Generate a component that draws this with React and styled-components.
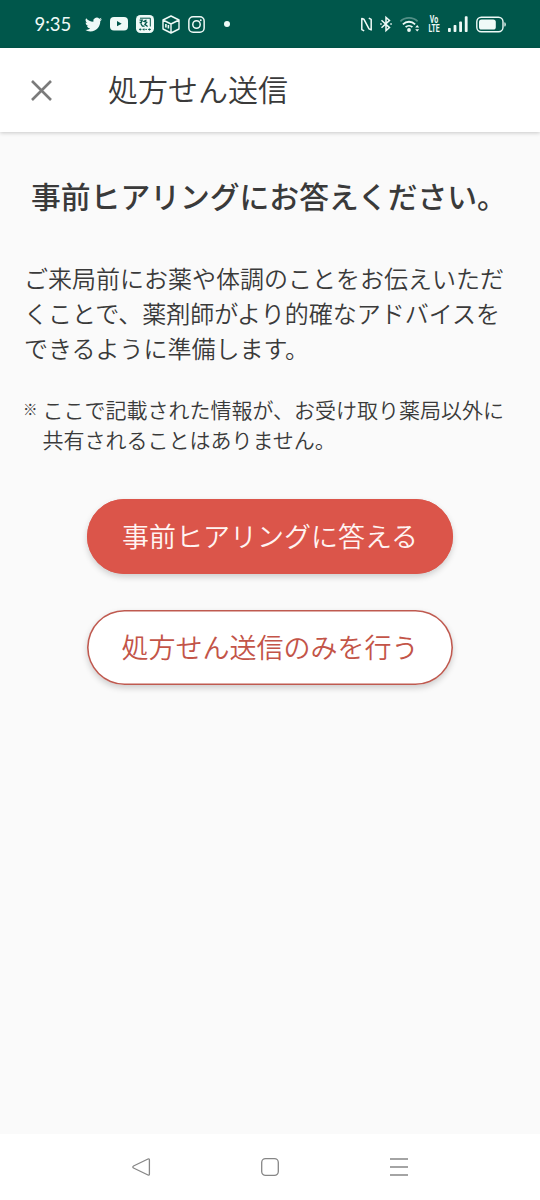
import React from 'react';
import styled, { createGlobalStyle } from 'styled-components';

const GlobalStyle = createGlobalStyle`
  * { box-sizing: border-box; }
  body {
    margin: 0;
    background: #fafafa;
    color: #3a3a3a;
    font-family: "Noto Sans CJK JP", "Noto Sans", sans-serif;
    font-weight: 350;
  }
  p, h1, h2 { margin: 0; font-weight: inherit; }
`;

const Screen = styled.div`
  display: flex;
  flex-direction: column;
  width: 540px;
  height: 1200px;
  overflow: hidden;
`;

const StatusBar = styled.header`
  display: flex;
  flex: none;
  align-items: center;
  justify-content: space-between;
  height: 48px;
  padding: 0 34px;
  background: #00574b;
  color: #effaf7;
`;

const StatusGroup = styled.div`
  display: flex;
  align-items: center;
  gap: ${(p) => p.$gap}px;
`;

const Clock = styled.span`
  width: 43px;
  padding-left: 0.5px;
  font: 400 18.5px/48px "Lato", sans-serif;
`;

const Icon = styled.svg`
  display: block;
  flex: none;
  overflow: visible;
`;

const Dot = styled.span`
  width: 6px;
  height: 6px;
  margin-left: 10.5px;
  border-radius: 50%;
  background: currentColor;
`;

const Volte = styled.span`
  display: flex;
  justify-content: center;
  width: 12px;
  font: 700 10.5px/9px "Roboto", sans-serif;
  text-align: center;
  transform: scaleX(0.66);
`;

const AppBar = styled.div`
  position: relative;
  display: flex;
  flex: none;
  align-items: center;
  gap: 56px;
  height: 84px;
  padding-left: 31px;
  background: #fff;
  box-shadow: 0 1px 4px rgba(0, 0, 0, 0.2);
`;

const CloseButton = styled.button`
  width: 21px;
  height: 21px;
  padding: 0;
  border: 0;
  background: none;
  color: #7b7b7b;
`;

const Title = styled.h1`
  padding-bottom: 4px;
  font-size: 30px;
  line-height: 44px;
`;

const Content = styled.main`
  display: flex;
  flex: 1;
  flex-direction: column;
  padding: 41px 24px 0;
`;

const Heading = styled.h2`
  padding-left: 7px;
  font-size: 29.8px;
  font-weight: 500;
  line-height: 44px;
  white-space: nowrap;
`;

const Lead = styled.p`
  margin-top: 43px;
  font-size: 24px;
  line-height: 35px;
  white-space: nowrap;
`;

const Note = styled.div`
  display: flex;
  margin-top: 29px;
  font-size: 21px;
  line-height: 30px;
  white-space: nowrap;
`;

const NoteMark = styled.span`
  width: 18.5px;
  margin-left: -1px;
  margin-right: 1px;
  font-size: 14.5px;
  font-weight: 700;
`;

const Actions = styled.div`
  display: flex;
  flex-direction: column;
  align-items: center;
  gap: 36px;
  margin-top: 45px;
`;

const PillButton = styled.button`
  width: 366px;
  height: 75px;
  padding: 0 0 2px;
  border: 0;
  border-radius: 38px;
  background: ${(p) => (p.$filled ? '#db554a' : '#fff')};
  box-shadow:
    inset 0 0 0 1.6px ${(p) => (p.$filled ? '#db554a' : '#bf5a50')},
    0 3px 6px rgba(0, 0, 0, 0.18);
  color: ${(p) => (p.$filled ? '#fff4f2' : '#c35448')};
  font: 350 27px/40px "Noto Sans CJK JP", sans-serif;
  white-space: nowrap;
`;

const NavBar = styled.nav`
  display: flex;
  flex: none;
  align-items: center;
  justify-content: space-between;
  height: 66px;
  padding: 0 132px;
  background: #fff;
  color: #868686;
`;

function TwitterIcon() {
  return (
    <Icon width="17" height="15" viewBox="0 2 24 20" fill="currentColor">
      <path d="M23.95 4.57a10 10 0 0 1-2.82.78 4.96 4.96 0 0 0 2.16-2.73c-.95.56-2 .96-3.13 1.19a4.92 4.92 0 0 0-8.38 4.48C7.69 8.1 4.07 6.13 1.64 3.16a4.92 4.92 0 0 0 1.52 6.57 4.9 4.9 0 0 1-2.23-.61v.06a4.92 4.92 0 0 0 3.95 4.83 5 5 0 0 1-2.21.08 4.94 4.94 0 0 0 4.6 3.42A9.87 9.87 0 0 1 0 19.54a13.99 13.99 0 0 0 7.56 2.21c9.05 0 14-7.5 14-13.98 0-.21 0-.42-.02-.63a9.94 9.94 0 0 0 2.46-2.55z" />
    </Icon>
  );
}

function YoutubeIcon() {
  return (
    <Icon width="18" height="13.5" viewBox="0 0 18 13.5">
      <rect width="18" height="13.5" rx="4" fill="currentColor" />
      <path d="M7 4.1v5.2l4.7-2.6z" fill="#00574b" />
    </Icon>
  );
}

function GameIcon() {
  return (
    <Icon width="18" height="18" viewBox="0 0 18 18">
      <rect width="18" height="18" rx="4.5" fill="currentColor" />
      <g fill="none" stroke="#00574b">
        <path d="M4 3.200h10.300v8.300" strokeWidth="1" />
        <path d="M3.600 5.200h2.600l-1 2.300H3.600M4.800 8.500l1.600 2.700h2.200M10.500 5l-2.500 1.300 2.700 1-1.800 2 2.700 2.100" strokeWidth="1.300" />
        <path d="M3 14.400h2.500M6.500 14.400h1.800M9.300 14.400H11M12 14.400h3M4.300 13.500v2M8 13.500v2M13.500 13.500v2" strokeWidth="0.9" />
      </g>
    </Icon>
  );
}

function BoxIcon() {
  return (
    <Icon width="18" height="19" viewBox="0 0 18 19" fill="none" stroke="currentColor" strokeWidth="1.4" strokeLinejoin="round">
      <path d="M9 1l8 4v9l-8 4-8-4V5zM1 5l8 4 8-4M9 9v9" />
      <path d="M3.900 8.900v3.600M6.400 10v3.600" strokeWidth="1.6" />
    </Icon>
  );
}

function InstagramIcon() {
  return (
    <Icon width="17" height="17" viewBox="0 0 16 16" fill="none" stroke="currentColor" strokeWidth="1.4">
      <rect x="0.8" y="0.8" width="14.4" height="14.4" rx="4" />
      <circle cx="8" cy="8" r="3.5" />
      <circle cx="12" cy="4" r="0.9" fill="currentColor" stroke="none" />
    </Icon>
  );
}

function NfcIcon() {
  return (
    <Icon width="11" height="15" viewBox="0 0 11 15" fill="none" stroke="currentColor" strokeWidth="1.5" strokeLinejoin="round">
      <path d="M3.200 13.900L.8 12.600V1.500l2.200.8 5 9.600 2.200 1V2.400L7.800 1.100" />
    </Icon>
  );
}

function BluetoothIcon() {
  return (
    <Icon width="12" height="16" viewBox="0 0 12 16" fill="none" stroke="currentColor" strokeWidth="1.5">
      <path d="M1.500 4.200l8 7.400-3.500 3V1.400l3.500 3-8 7.400" />
      <path d="M.2 7.300h1.500v1.500H.2zM10.300 7.300h1.500v1.500h-1.500z" fill="currentColor" stroke="none" />
    </Icon>
  );
}

function WifiIcon() {
  return (
    <Icon width="19.500" height="15" viewBox="0 0 19.500 15" fill="none" stroke="currentColor" strokeWidth="1.8">
      <path d="M.4 4.400C5.100-.2 12.900-.2 17.600 4.400" opacity="0.35" />
      <path d="M2.900 7.300c3.500-3.400 8.700-3.400 12.200 0M5.600 10.200c1.900-1.800 4.900-1.800 6.800 0" />
      <circle cx="9" cy="13" r="1.900" fill="currentColor" stroke="none" />
      <path d="M15.200 10.400l2-2.400 2 2.400zM15.200 12.200l2 2.400 2-2.400z" fill="currentColor" stroke="none" />
    </Icon>
  );
}

function SignalIcon() {
  return (
    <Icon width="20" height="16" viewBox="0 0 20 16" fill="currentColor">
      <rect x="0" y="12" width="2.800" height="4" rx="0.8" />
      <rect x="5.600" y="9" width="2.800" height="7" rx="0.8" />
      <rect x="11.200" y="5.500" width="2.800" height="10.500" rx="0.8" />
      <rect x="16.800" y="0.300" width="2.800" height="15.700" rx="0.8" />
    </Icon>
  );
}

function BatteryIcon() {
  return (
    <Icon width="30" height="17" viewBox="0 0 30 17">
      <rect x="0.8" y="1.200" width="26.200" height="14.600" rx="4.500" fill="none" stroke="currentColor" strokeWidth="1.4" />
      <rect x="3" y="3.400" width="16.800" height="10.200" rx="2.600" fill="currentColor" />
      <path d="M28.400 6.200q1.400 0 1.400 2.200t-1.400 2.200z" fill="currentColor" />
    </Icon>
  );
}

function CloseIcon() {
  return (
    <Icon width="21" height="21" viewBox="0 0 21 21" stroke="currentColor" strokeWidth="2.6">
      <path d="M1 1l19 19M20 1L1 20" />
    </Icon>
  );
}

function NavIcon({ children }) {
  return (
    <Icon width="18" height="18" viewBox="0 0 18 18" fill="none" stroke="currentColor" strokeWidth="1.3" strokeLinejoin="round">
      {children}
    </Icon>
  );
}

export default function App() {
  return (
    <Screen>
      <GlobalStyle />
      <StatusBar>
        <StatusGroup $gap={8}>
          <Clock>9:35</Clock>
          <TwitterIcon />
          <YoutubeIcon />
          <GameIcon />
          <BoxIcon />
          <InstagramIcon />
          <Dot />
        </StatusGroup>
        <StatusGroup $gap={8.2}>
          <NfcIcon />
          <BluetoothIcon />
          <WifiIcon />
          <Volte>
            <span>
              Vo
              <br />
              LTE
            </span>
          </Volte>
          <SignalIcon />
          <BatteryIcon />
        </StatusGroup>
      </StatusBar>
      <AppBar>
        <CloseButton aria-label="閉じる">
          <CloseIcon />
        </CloseButton>
        <Title>処方せん送信</Title>
      </AppBar>
      <Content>
        <Heading>事前ヒアリングにお答えください。</Heading>
        <Lead>
          ご来局前にお薬や体調のことをお伝えいただ
          <br />
          くことで、薬剤師がより的確なアドバイスを
          <br />
          できるように準備します。
        </Lead>
        <Note>
          <NoteMark>※</NoteMark>
          <p>
            ここで記載された情報が、お受け取り薬局以外に
            <br />
            共有されることはありません。
          </p>
        </Note>
        <Actions>
          <PillButton $filled>事前ヒアリングに答える</PillButton>
          <PillButton>処方せん送信のみを行う</PillButton>
        </Actions>
      </Content>
      <NavBar>
        <NavIcon>
          <path d="M16 1L1.500 8a1.100 1.100 0 0 0 0 2L16 17q1.400.5 1.400-1V2q0-1.500-1.400-1z" />
        </NavIcon>
        <NavIcon>
          <rect x="0.7" y="0.7" width="16.600" height="16.600" rx="3.800" />
        </NavIcon>
        <NavIcon>
          <path d="M0 1h18M0 9h18M0 17h18" strokeWidth="1.6" />
        </NavIcon>
      </NavBar>
    </Screen>
  );
}
